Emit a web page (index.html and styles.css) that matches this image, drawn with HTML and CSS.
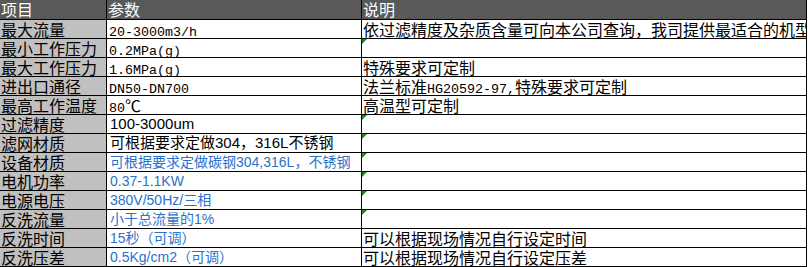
FILE: index.html
```html
<!DOCTYPE html>
<html lang="zh-CN">
<head>
<meta charset="utf-8">
<title>参数表</title>
<link rel="stylesheet" href="styles.css">
</head>
<body>
<div class="sheet">
  <div class="c h k">项目</div>
  <div class="c h">参数</div>
  <div class="c h">说明</div>

  <div class="c k">最大流量</div>
  <div class="c v"><span class="m">20-3000m3/h</span></div>
  <div class="c d">依过滤精度及杂质含量可向本公司查询，我司提供最适合的机型</div>

  <div class="c k">最小工作压力</div>
  <div class="c v"><span class="m">0.2MPa(g)</span></div>
  <div class="c d flag"></div>

  <div class="c k">最大工作压力</div>
  <div class="c v"><span class="m">1.6MPa(g)</span></div>
  <div class="c d">特殊要求可定制</div>

  <div class="c k">进出口通径</div>
  <div class="c v"><span class="m">DN50-DN700</span></div>
  <div class="c d">法兰标准<span class="m">HG20592-97,</span>特殊要求可定制</div>

  <div class="c k">最高工作温度</div>
  <div class="c v"><span class="m">80</span>℃</div>
  <div class="c d">高温型可定制</div>

  <div class="c k">过滤精度</div>
  <div class="c v s">100-3000um</div>
  <div class="c d flag"></div>

  <div class="c k">滤网材质</div>
  <div class="c v s">可根据要求定做304，316L不锈钢</div>
  <div class="c d flag"></div>

  <div class="c k">设备材质</div>
  <div class="c v b">可根据要求定做碳钢304,316L，不锈钢</div>
  <div class="c d flag"></div>

  <div class="c k">电机功率</div>
  <div class="c v b">0.37-1.1KW</div>
  <div class="c d flag"></div>

  <div class="c k">电源电压</div>
  <div class="c v b">380V/50Hz/三相</div>
  <div class="c d flag"></div>

  <div class="c k">反洗流量</div>
  <div class="c v b">小于总流量的1%</div>
  <div class="c d flag"></div>

  <div class="c k">反洗时间</div>
  <div class="c v b">15秒（可调）</div>
  <div class="c d">可以根据现场情况自行设定时间</div>

  <div class="c k">反洗压差</div>
  <div class="c v b">0.5Kg/cm2（可调）</div>
  <div class="c d">可以根据现场情况自行设定压差</div>
</div>
</body>
</html>
```

FILE: styles.css
```css
html, body {
  margin: 0;
  padding: 0;
  background: #ffffff;
}

.sheet {
  display: grid;
  grid-template-columns: 107px 255px 445px;
  grid-template-rows: 20px repeat(13, 19px);
  width: 807px;
  font-family: "Noto Sans CJK SC", sans-serif;
  font-size: 16px;
  color: #000;
}

.c {
  box-sizing: border-box;
  border-right: 1px solid #000;
  border-bottom: 1px solid #000;
  white-space: nowrap;
  line-height: 18px;
  padding-left: 1px;
  position: relative;
}

.h {
  background: #595959;
  color: #ffffff;
  line-height: 19px;
}

.k {
  background: #c0c0c0;
}

.h.k {
  background: #595959;
}

.v {
  padding-left: 2px;
}

.d {
  padding-left: 1px;
  overflow-x: clip;
  overflow-y: visible;
}

.m {
  font-family: "Liberation Mono", monospace;
  font-size: 13.33px;
}

.s {
  font-family: "Liberation Sans", "Noto Sans CJK SC", sans-serif;
  font-size: 15px;
  padding-left: 3px;
}

.b {
  font-family: "Liberation Sans", "Noto Sans CJK SC", sans-serif;
  font-size: 14px;
  color: #2a72cc;
  padding-left: 3px;
}

.flag::before {
  content: "";
  position: absolute;
  left: 0;
  top: 0;
  width: 0;
  height: 0;
  border-top: 5px solid #1a8a1a;
  border-right: 5px solid transparent;
}
```
